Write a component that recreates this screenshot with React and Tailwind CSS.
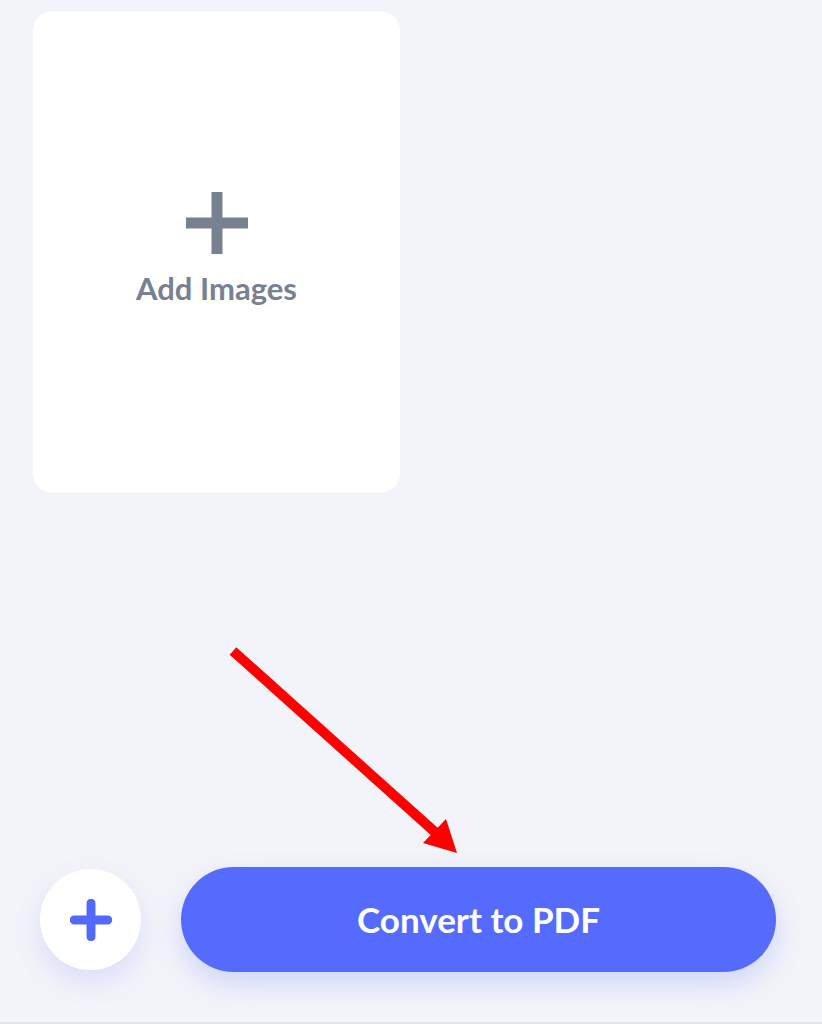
import React from "react";

function PlusIcon({ size, stroke, color }) {
  return (
    <svg width={size} height={size} viewBox="0 0 40 40" fill="none">
      <path
        d="M20 4v32M4 20h32"
        stroke={color}
        strokeWidth={stroke}
        strokeLinecap="round"
      />
    </svg>
  );
}

export default function App() {
  return (
    <div
      className="relative flex h-[1024px] w-full flex-col overflow-hidden border-b-2 border-[#e4e5ea] bg-[#f3f4f9]"
      style={{ fontFamily: "Lato, 'Noto Sans', sans-serif" }}
    >
      {/* image drop card */}
      <div className="ml-[33px] mt-[11px] flex h-[482px] w-[367px] flex-col items-center justify-center rounded-[20px] bg-white">
        <svg width="62" height="62" viewBox="0 0 62 62" className="mt-[-8px]">
          <path d="M31 0v62M0 31h62" stroke="#78818f" strokeWidth="11" />
        </svg>
        <span className="mt-[19px] text-[31px] font-bold leading-none text-[#78818f]">
          Add Images
        </span>
      </div>

      <div className="flex-1" />

      {/* bottom actions */}
      <div className="flex items-center pb-[50px] pl-[40px]">
        <button className="flex h-[101px] w-[101px] items-center justify-center rounded-full bg-white shadow-[0_12px_28px_rgba(84,104,255,0.16)]">
          <PlusIcon size={42} stroke={8.5} color="#5368fd" />
        </button>
        <button className="ml-[40px] flex h-[105px] w-[595px] items-center justify-center rounded-full bg-[#546bfe] shadow-[0_12px_28px_rgba(84,104,255,0.22)]">
          <span className="text-[35px] font-bold leading-none text-white">Convert to PDF</span>
        </button>
      </div>

      {/* red annotation arrow */}
      <svg
        className="pointer-events-none absolute left-0 top-0"
        width="822"
        height="1024"
        viewBox="0 0 822 1024"
      >
        <line x1="233" y1="651" x2="436" y2="833" stroke="#ff0000" strokeWidth="10" />
        <polygon points="457,853 423,843 446,819" fill="#ff0000" />
      </svg>
    </div>
  );
}
